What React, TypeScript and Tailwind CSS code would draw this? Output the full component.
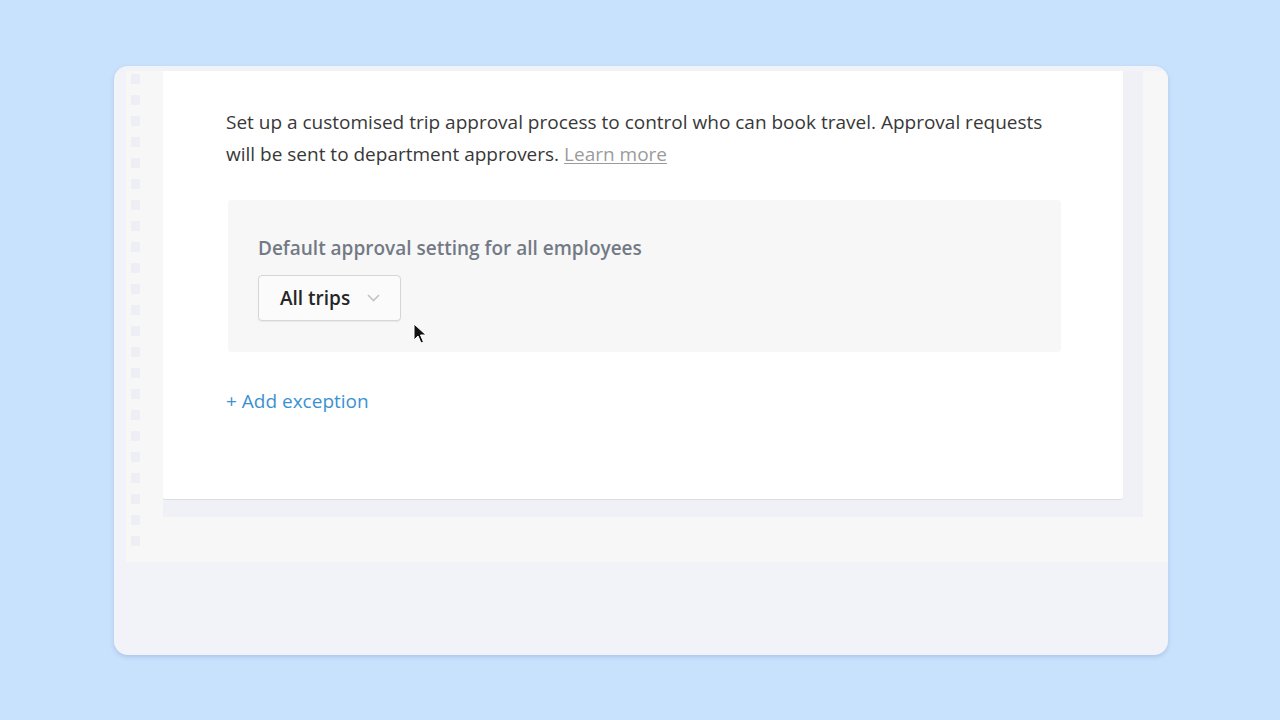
import React from 'react';

const squares = Array.from({ length: 23 }, (_, i) => i);

function Cursor() {
  return (
    <svg className="absolute left-[413px] top-[323px]" width="14" height="22" viewBox="0 0 14 22">
      <path d="M1 1 L1 17 L5 13 L8 20 L10.5 19 L7.5 12 L13 12 Z" fill="#111" stroke="#fff" strokeWidth="1" strokeLinejoin="round" />
    </svg>
  );
}

export default function App() {
  return (
    <div className="relative w-[1280px] h-[720px] bg-[#c8e1fc] font-['Open_Sans',sans-serif] overflow-hidden">
      <div className="absolute left-[114px] top-[66px] w-[1054px] h-[589px] rounded-[14px] bg-[#f2f3f8] shadow-[0_2px_4px_rgba(120,150,200,0.35)] pl-[12px] pt-[5px] overflow-hidden">
        <div className="flex h-[491px] bg-[#f7f7f8]">
          {/* skeleton rail */}
          <div className="w-[37px] pt-[3px] pl-[5px] flex flex-col gap-[11px]">
            {squares.map((i) => (
              <div key={i} className="w-[9px] h-[10px] bg-[#eeeff5]" />
            ))}
          </div>

          <div className="flex flex-col">
            <div className="bg-[#f0f1f6] pr-[20px] pb-[17px]">
              <div className="w-[960px] h-[429px] bg-white rounded-b-[3px] border-b border-[#dedce2] pl-[63px] pt-[35px]">
                <p className="w-[840px] text-[19px] leading-[32px] text-[#383838]">
                  Set up a customised trip approval process to control who can book travel. Approval requests will be sent to department approvers.{' '}
                  <a className="text-[#9b9b9b] underline decoration-1 underline-offset-2">Learn more</a>
                </p>

                <div className="mt-[30px] ml-[2px] w-[833px] h-[152px] bg-[#f7f7f8] rounded-[3px] pl-[30px] pt-[36px]">
                  <div className="text-[19px] leading-[24px] font-semibold text-[#737a85]">
                    Default approval setting for all employees
                  </div>
                  <div className="mt-[15px] w-[143px] h-[46px] flex items-center justify-between pl-[21px] pr-[20px] bg-[#fbfbfc] border border-[#d6d6da] rounded-[4px] shadow-[0_1px_1px_rgba(0,0,0,0.06)]">
                    <span className="text-[19px] font-semibold text-[#262626]">All trips</span>
                    <svg width="13" height="8" viewBox="0 0 13 8">
                      <path d="M1 1 L6.5 6.5 L12 1" fill="none" stroke="#c4c4c8" strokeWidth="1.6" />
                    </svg>
                  </div>
                </div>

                <div className="mt-[37px] text-[19px] leading-[24px] text-[#3c91d1]">+ Add exception</div>
              </div>
            </div>
          </div>
        </div>
      </div>
      <Cursor />
    </div>
  );
}
